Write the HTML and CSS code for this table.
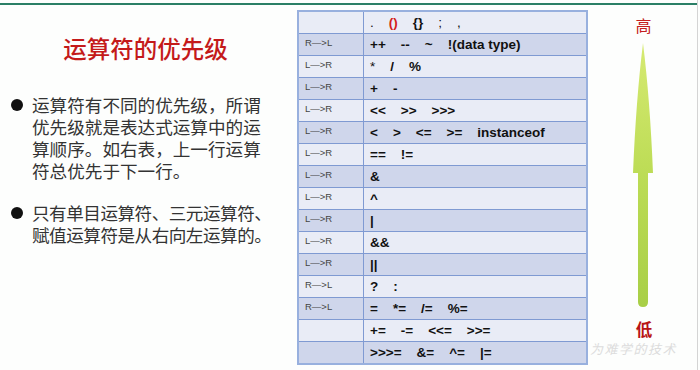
FILE: index.html
```html
<!DOCTYPE html>
<html lang="zh">
<head>
<meta charset="utf-8">
<title>运算符的优先级</title>
<link rel="stylesheet" href="styles.css">
</head>
<body>
<div class="slide">
  <div class="topline"></div>
  <div class="main">
    <section class="left">
      <h1 class="title">运算符的优先级</h1>
      <ul class="points">
        <li class="point"><span class="dot"></span><p>运算符有不同的优先级，所谓<br>优先级就是表达式运算中的运<br>算顺序。如右表，上一行运算<br>符总优先于下一行。</p></li>
        <li class="point"><span class="dot"></span><p class="tight">只有单目运算符、三元运算符、<br>赋值运算符是从右向左运算的。</p></li>
      </ul>
    </section>
    <table class="prec">
      <tr class="lt"><td class="dir"></td><td class="ops"><span class="n">.</span><span class="red">()</span><span>{}</span><span class="n">;</span><span class="n">,</span></td></tr>
      <tr class="dk"><td class="dir">R—&gt;L</td><td class="ops"><span>++</span><span>--</span><span>~</span><span>!(data type)</span></td></tr>
      <tr class="lt"><td class="dir">L—&gt;R</td><td class="ops"><span class="n">*</span><span>/</span><span>%</span></td></tr>
      <tr class="dk"><td class="dir">L—&gt;R</td><td class="ops"><span>+</span><span>-</span></td></tr>
      <tr class="lt"><td class="dir">L—&gt;R</td><td class="ops"><span>&lt;&lt;</span><span>&gt;&gt;</span><span>&gt;&gt;&gt;</span></td></tr>
      <tr class="dk"><td class="dir">L—&gt;R</td><td class="ops"><span>&lt;</span><span>&gt;</span><span>&lt;=</span><span>&gt;=</span><span>instanceof</span></td></tr>
      <tr class="lt"><td class="dir">L—&gt;R</td><td class="ops"><span>==</span><span>!=</span></td></tr>
      <tr class="dk"><td class="dir">L—&gt;R</td><td class="ops"><span>&amp;</span></td></tr>
      <tr class="lt"><td class="dir">L—&gt;R</td><td class="ops"><span>^</span></td></tr>
      <tr class="dk"><td class="dir">L—&gt;R</td><td class="ops"><span>|</span></td></tr>
      <tr class="lt"><td class="dir">L—&gt;R</td><td class="ops"><span>&amp;&amp;</span></td></tr>
      <tr class="dk"><td class="dir">L—&gt;R</td><td class="ops"><span>||</span></td></tr>
      <tr class="lt"><td class="dir">R—&gt;L</td><td class="ops"><span>?</span><span>:</span></td></tr>
      <tr class="dk"><td class="dir">R—&gt;L</td><td class="ops"><span>=</span><span>*=</span><span>/=</span><span>%=</span></td></tr>
      <tr class="lt"><td class="dir"></td><td class="ops"><span>+=</span><span>-=</span><span>&lt;&lt;=</span><span>&gt;&gt;=</span></td></tr>
      <tr class="dk"><td class="dir"></td><td class="ops"><span>&gt;&gt;&gt;=</span><span>&amp;=</span><span>^=</span><span>|=</span></td></tr>
    </table>
    <aside class="right">
      <div class="hi">高</div>
      <svg class="arrow" width="108" height="272" viewBox="0 0 108 272" aria-hidden="true">
        <defs>
          <linearGradient id="g" x1="0" y1="0" x2="0" y2="1">
            <stop offset="0" stop-color="#d6ea72"/>
            <stop offset="0.5" stop-color="#bcdc55"/>
            <stop offset="1" stop-color="#a8cf47"/>
          </linearGradient>
        </defs>
        <path d="M55 3 Q62 60 65 133 L60 133 L60 262 Q60 267 55 267 Q50 267 50 262 L50 133 L45 133 Q48 60 55 3 Z" fill="url(#g)"/>
      </svg>
      <div class="lo">低</div>
      <div class="mark">为难学的技术</div>
    </aside>
  </div>
</div>
</body>
</html>
```

FILE: styles.css
```css
html, body {
  margin: 0;
  padding: 0;
  background: #fdfefd;
}
.slide {
  width: 697px;
  height: 370px;
  border-right: 1px solid #d4d4d4;
  background: #fdfefd;
  overflow: hidden;
}
.topline {
  height: 2px;
  margin-top: 3px;
  background: #2a7f66;
}
.main {
  display: flex;
  align-items: flex-start;
}
.left {
  width: 297px;
  flex: none;
  padding-top: 28px;
  font-family: "Noto Sans CJK SC", sans-serif;
}
.title {
  margin: 0;
  padding-right: 6px;
  text-align: center;
  font-size: 23.5px;
  line-height: 30px;
  font-weight: 500;
  color: #c41a1a;
}
.points {
  list-style: none;
  margin: 31px 0 0;
  padding: 0 0 0 11px;
}
.point {
  display: flex;
  align-items: flex-start;
  gap: 9px;
  margin-bottom: 20px;
}
.dot {
  flex: none;
  width: 12px;
  height: 12px;
  margin-top: 5px;
  border-radius: 50%;
  background: #111;
}
.point p {
  margin: 0;
  font-size: 17.6px;
  line-height: 22px;
  color: #333;
  white-space: nowrap;
}
.point p.tight {
  letter-spacing: -0.5px;
}
.prec {
  flex: none;
  margin-top: 5px;
  width: 291px;
  border-collapse: collapse;
  border: 2px solid #98b0de;
  font-family: "Liberation Sans", Arial, sans-serif;
}
.prec td {
  height: 21px;
  padding: 0;
  border: 1px solid #7f9ad2;
}
.prec tr.lt td { background: #e9ecf6; }
.prec tr.dk td { background: #cfd6eb; }
.dir {
  width: 58px;
  padding-left: 6px !important;
  font-size: 9.5px;
  color: #444;
  vertical-align: top;
  padding-top: 3px !important;
  height: 18px !important;
}
.ops {
  padding-left: 6px !important;
  font-size: 13.5px;
  font-weight: bold;
  color: #111;
  white-space: nowrap;
}
.ops span {
  margin-right: 15px;
}
.ops span.n {
  font-weight: normal;
}
.ops span.red {
  color: #d41c1c;
}
.right {
  flex: 1;
  display: flex;
  flex-direction: column;
  align-items: stretch;
  font-family: "Noto Sans CJK SC", sans-serif;
}
.hi {
  margin-top: 11px;
  height: 18px;
  line-height: 18px;
  font-size: 16px;
  text-align: center;
  padding-left: 2px;
  color: #c42020;
}
.arrow {
  display: block;
  margin-top: 6px;
}
.lo {
  margin-top: 8px;
  height: 18px;
  line-height: 18px;
  font-size: 16.5px;
  font-weight: bold;
  text-align: center;
  padding-left: 3px;
  color: #b81414;
}
.mark {
  margin-top: 3px;
  padding-left: 2px;
  font-size: 13px;
  line-height: 15px;
  font-style: italic;
  letter-spacing: 1.5px;
  color: #dcdcdc;
  white-space: nowrap;
}
```
